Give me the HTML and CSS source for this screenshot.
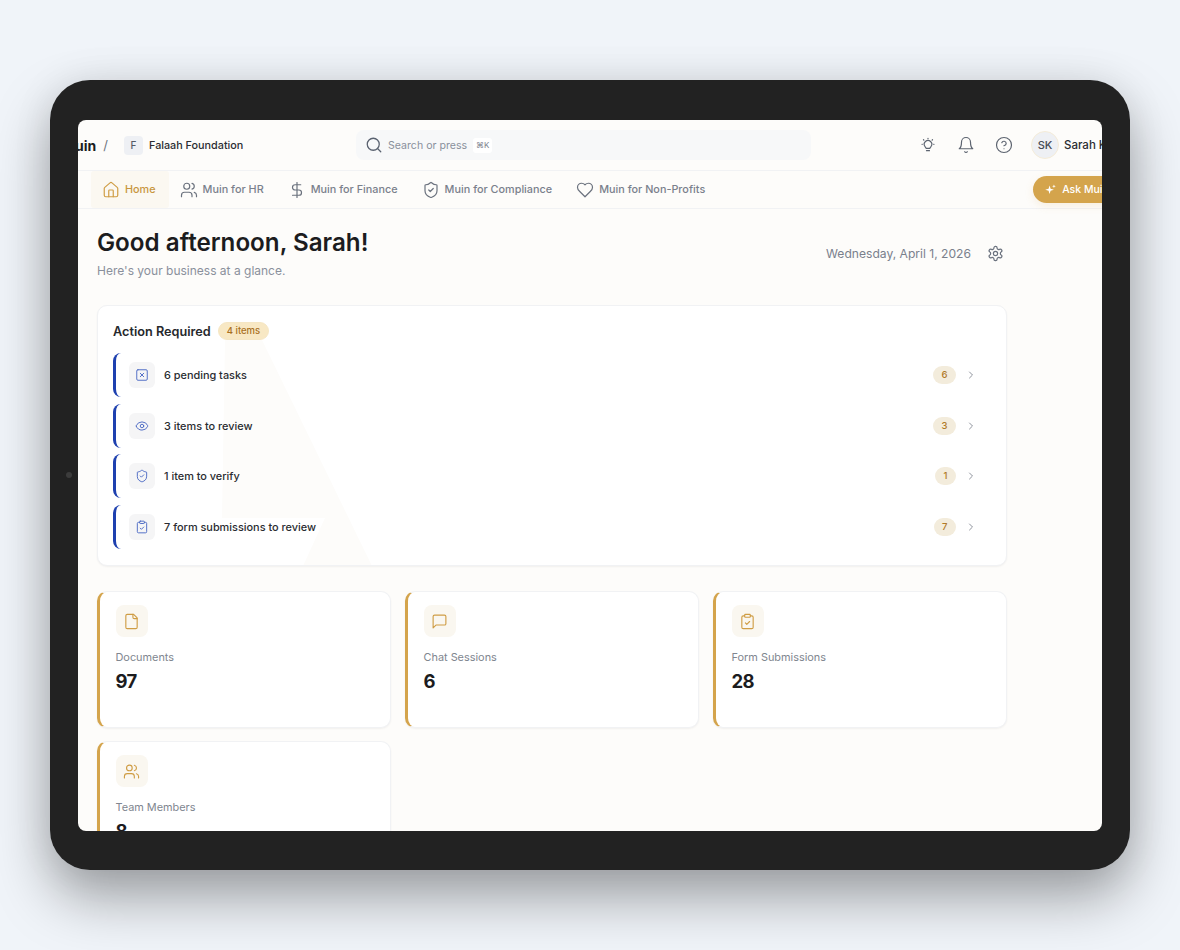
FILE: index.html
```html
<!DOCTYPE html>
<html lang="en">
<head>
<meta charset="utf-8">
<title>Muin</title>
<link rel="stylesheet" href="styles.css">
</head>
<body>
<div class="device">
  <span class="camera"></span>
  <div class="screen">
    <header class="topbar">
      <div class="brand"><strong class="logo">Muin</strong><span class="slash">/</span></div>
      <span class="org-tile">F</span>
      <span class="org-name">Falaah Foundation</span>
      <div class="search">
        <svg class="ic-search" viewBox="0 0 24 24"><circle cx="11" cy="11" r="8"/><path d="m21 21-4.3-4.3"/></svg>
        <span class="search-text">Search or press</span>
        <kbd class="kbd">⌘K</kbd>
      </div>
      <div class="top-actions">
        <svg class="ic-top" viewBox="0 0 24 24"><path d="M9.500 16.500c-.2-1-.7-1.500-1.400-2.300A5 5 0 1 1 15.900 14.200c-.7.8-1.200 1.300-1.400 2.300z"/><path d="M10 19.500h4"/><path d="M12 3v.5"/><path d="M6 5l.5.5"/><path d="M18 5l-.5.5"/><path d="M4 11h.5"/><path d="M19.500 11h.5"/></svg>
        <svg class="ic-top" viewBox="0 0 24 24"><path d="M6 8a6 6 0 0 1 12 0c0 7 3 9 3 9H3s3-2 3-9"/><path d="M10.300 21a1.940 1.940 0 0 0 3.400 0"/></svg>
        <svg class="ic-top" viewBox="0 0 24 24"><circle cx="12" cy="12" r="10"/><path d="M9.090 9a3 3 0 0 1 5.830 1c0 2-3 3-3 3"/><path d="M12 17h.01"/></svg>
      </div>
      <span class="avatar">SK</span>
      <span class="user-name">Sarah Khan</span>
    </header>
    <nav class="tabs">
      <a class="tab tab-active"><svg class="ic-nav" viewBox="0 0 24 24"><path d="M15 21v-8a1 1 0 0 0-1-1h-4a1 1 0 0 0-1 1v8"/><path d="M3 10a2 2 0 0 1 .7-1.500l7-6a2 2 0 0 1 2.600 0l7 6a2 2 0 0 1 .7 1.500v9a2 2 0 0 1-2 2H5a2 2 0 0 1-2-2z"/></svg>Home</a>
      <a class="tab"><svg class="ic-nav" viewBox="0 0 24 24"><path d="M16 21v-2a4 4 0 0 0-4-4H6a4 4 0 0 0-4 4v2"/><circle cx="9" cy="7" r="4"/><path d="M22 21v-2a4 4 0 0 0-3-3.870"/><path d="M16 3.130a4 4 0 0 1 0 7.750"/></svg>Muin for HR</a>
      <a class="tab"><svg class="ic-nav" viewBox="0 0 24 24"><path d="M12 2v20"/><path d="M17 5H9.500a3.500 3.500 0 0 0 0 7h5a3.500 3.500 0 0 1 0 7H6"/></svg>Muin for Finance</a>
      <a class="tab"><svg class="ic-nav" viewBox="0 0 24 24"><path d="M20 13c0 5-3.500 7.500-7.660 8.950a1 1 0 0 1-.670-.010C7.500 20.500 4 18 4 13V6a1 1 0 0 1 1-1c2 0 4.500-1.200 6.240-2.720a1.170 1.170 0 0 1 1.520 0C14.510 3.810 17 5 19 5a1 1 0 0 1 1 1z"/><path d="m9 12 2 2 4-4"/></svg>Muin for Compliance</a>
      <a class="tab"><svg class="ic-nav" viewBox="0 0 24 24"><path d="M19 14c1.490-1.460 3-3.210 3-5.500A5.500 5.500 0 0 0 16.500 3c-1.760 0-3 .5-4.500 2-1.500-1.500-2.740-2-4.500-2A5.500 5.500 0 0 0 2 8.500c0 2.300 1.500 4.050 3 5.500l7 7Z"/></svg>Muin for Non-Profits</a>
      <button class="ask"><svg class="ic-spark" viewBox="0 0 24 24"><path d="M10 3l2.200 7.300 7.300 2.200-7.300 2.200L10 22l-2.200-7.300L.5 12.500l7.300-2.200z"/><path d="M19.500 1l1 3 3 1-3 1-1 3-1-3-3-1 3-1z"/></svg>Ask Muin</button>
    </nav>
    <main class="main">
      <section class="hello">
        <div>
          <h1 class="title">Good afternoon, Sarah!</h1>
          <p class="subtitle">Here's your business at a glance.</p>
        </div>
        <div class="date-wrap">
          <span class="date">Wednesday, April 1, 2026</span>
          <svg class="ic-gear" viewBox="0 0 24 24"><path d="M12.220 2h-.44a2 2 0 0 0-2 2v.18a2 2 0 0 1-1 1.730l-.43.25a2 2 0 0 1-2 0l-.15-.08a2 2 0 0 0-2.730.73l-.22.38a2 2 0 0 0 .73 2.730l.15.1a2 2 0 0 1 1 1.720v.51a2 2 0 0 1-1 1.740l-.15.09a2 2 0 0 0-.73 2.730l.22.38a2 2 0 0 0 2.730.73l.15-.08a2 2 0 0 1 2 0l.43.25a2 2 0 0 1 1 1.730V20a2 2 0 0 0 2 2h.44a2 2 0 0 0 2-2v-.18a2 2 0 0 1 1-1.730l.43-.25a2 2 0 0 1 2 0l.15.08a2 2 0 0 0 2.730-.73l.22-.39a2 2 0 0 0-.73-2.730l-.15-.08a2 2 0 0 1-1-1.740v-.5a2 2 0 0 1 1-1.740l.15-.09a2 2 0 0 0 .73-2.730l-.22-.38a2 2 0 0 0-2.730-.73l-.15.08a2 2 0 0 1-2 0l-.43-.25a2 2 0 0 1-1-1.730V4a2 2 0 0 0-2-2z"/><circle cx="12" cy="12" r="3"/></svg>
        </div>
      </section>
      <section class="action-card">
        <svg class="watermark" viewBox="0 0 170 226"><path d="M15 0h37l110 226H93l22-48H12z"/></svg>
        <div class="action-head"><h2 class="action-title">Action Required</h2><span class="badge">4 items</span></div>
        <ul class="rows">
          <li class="row">
            <span class="row-tile"><svg class="ic-row" viewBox="0 0 24 24"><rect x="3" y="3" width="18" height="18" rx="2"/><path d="m15 9-6 6"/><path d="m9 9 6 6"/></svg></span>
            <span class="row-text">6 pending tasks</span><span class="count">6</span>
            <svg class="ic-chev" viewBox="0 0 24 24"><path d="m9 18 6-6-6-6"/></svg>
          </li>
          <li class="row">
            <span class="row-tile"><svg class="ic-row" viewBox="0 0 24 24"><path d="M2.060 12.350a1 1 0 0 1 0-.700 10.750 10.750 0 0 1 19.880 0 1 1 0 0 1 0 .700 10.750 10.750 0 0 1-19.880 0"/><circle cx="12" cy="12" r="3"/></svg></span>
            <span class="row-text">3 items to review</span><span class="count">3</span>
            <svg class="ic-chev" viewBox="0 0 24 24"><path d="m9 18 6-6-6-6"/></svg>
          </li>
          <li class="row">
            <span class="row-tile"><svg class="ic-row" viewBox="0 0 24 24"><path d="M20 13c0 5-3.500 7.500-7.660 8.950a1 1 0 0 1-.670-.010C7.500 20.500 4 18 4 13V6a1 1 0 0 1 1-1c2 0 4.500-1.200 6.240-2.720a1.170 1.170 0 0 1 1.520 0C14.510 3.810 17 5 19 5a1 1 0 0 1 1 1z"/><path d="m9 12 2 2 4-4"/></svg></span>
            <span class="row-text">1 item to verify</span><span class="count">1</span>
            <svg class="ic-chev" viewBox="0 0 24 24"><path d="m9 18 6-6-6-6"/></svg>
          </li>
          <li class="row">
            <span class="row-tile"><svg class="ic-row" viewBox="0 0 24 24"><rect x="8" y="2" width="8" height="4" rx="1"/><path d="M16 4h2a2 2 0 0 1 2 2v14a2 2 0 0 1-2 2H6a2 2 0 0 1-2-2V6a2 2 0 0 1 2-2h2"/><path d="m9 14 2 2 4-4"/></svg></span>
            <span class="row-text">7 form submissions to review</span><span class="count">7</span>
            <svg class="ic-chev" viewBox="0 0 24 24"><path d="m9 18 6-6-6-6"/></svg>
          </li>
        </ul>
      </section>
      <section class="stats">
        <article class="stat">
          <span class="stat-tile"><svg class="ic-stat" viewBox="0 0 24 24"><path d="M15 2H6a2 2 0 0 0-2 2v16a2 2 0 0 0 2 2h12a2 2 0 0 0 2-2V7Z"/><path d="M14 2v4a2 2 0 0 0 2 2h4"/></svg></span>
          <span class="stat-label">Documents</span><strong class="stat-num">97</strong>
        </article>
        <article class="stat">
          <span class="stat-tile"><svg class="ic-stat" viewBox="0 0 24 24"><path d="M21 15a2 2 0 0 1-2 2H7l-4 4V5a2 2 0 0 1 2-2h14a2 2 0 0 1 2 2z"/></svg></span>
          <span class="stat-label">Chat Sessions</span><strong class="stat-num">6</strong>
        </article>
        <article class="stat">
          <span class="stat-tile"><svg class="ic-stat" viewBox="0 0 24 24"><rect x="8" y="2" width="8" height="4" rx="1"/><path d="M16 4h2a2 2 0 0 1 2 2v14a2 2 0 0 1-2 2H6a2 2 0 0 1-2-2V6a2 2 0 0 1 2-2h2"/><path d="m9 14 2 2 4-4"/></svg></span>
          <span class="stat-label">Form Submissions</span><strong class="stat-num">28</strong>
        </article>
        <article class="stat">
          <span class="stat-tile"><svg class="ic-stat" viewBox="0 0 24 24"><path d="M16 21v-2a4 4 0 0 0-4-4H6a4 4 0 0 0-4 4v2"/><circle cx="9" cy="7" r="4"/><path d="M22 21v-2a4 4 0 0 0-3-3.870"/><path d="M16 3.130a4 4 0 0 1 0 7.750"/></svg></span>
          <span class="stat-label">Team Members</span><strong class="stat-num">8</strong>
        </article>
      </section>
    </main>
  </div>
</div>
</body>
</html>
```
FILE: styles.css
```css
* { box-sizing: border-box; }
html, body { height: 100%; }
body {
  margin: 0;
  background: #f0f4f9;
  font-family: "Inter", "Liberation Sans", sans-serif;
  color: #1c1c1e;
  overflow: hidden;
}
svg { fill: none; stroke: currentColor; stroke-width: 2; stroke-linecap: round; stroke-linejoin: round; flex: none; display: block; }
ul { list-style: none; margin: 0; padding: 0; }
h1, h2, p { margin: 0; }

.device {
  position: relative;
  width: 1080px;
  height: 790px;
  margin: 80px 0 0 50px;
  padding: 40px 28px 39px;
  background: #222222;
  border-radius: 40px;
  box-shadow: 0 28px 56px 0 rgba(0, 0, 0, .34), 0 0 40px rgba(0, 0, 0, .08);
}
.camera {
  position: absolute;
  left: 16px;
  top: 392px;
  width: 6px;
  height: 6px;
  border-radius: 50%;
  background: #3c3c3c;
}
.screen {
  height: 711px;
  border-radius: 8px;
  overflow: hidden;
  background: #fdfcfa;
}

.topbar {
  display: flex;
  align-items: center;
  height: 51px;
  border-bottom: 1px solid #f1f2f4;
  white-space: nowrap;
}
.topbar > * { flex: none; }
.brand { display: flex; align-items: center; width: 46px; margin-left: -16px; }
.logo { font-size: 14px; font-weight: 700; color: #1c1c1e; }
.slash { margin-left: 7px; font-size: 13px; color: #6f7682; }
.org-tile {
  display: flex; align-items: center; justify-content: center;
  width: 19px; height: 19px;
  margin-left: 16px;
  border-radius: 4px;
  background: #eef0f4;
  font-size: 10px; font-weight: 500; color: #555b66;
}
.org-name { margin-left: 6px; width: 207px; font-size: 10.800px; font-weight: 500; color: #2a2c31; }
.search {
  display: flex; align-items: center;
  width: 455px; height: 30px;
  padding-left: 9px;
  border-radius: 8px;
  background: #f7f8f9;
}
.ic-search { width: 18px; height: 18px; color: #5a6270; stroke-width: 1.700; }
.search-text { margin-left: 5px; font-size: 10.600px; color: #8a909c; }
.kbd {
  display: flex; align-items: center; justify-content: center;
  width: 19px; height: 15px;
  margin-left: 6px;
  border-radius: 3px;
  background: #fff;
  font-family: inherit; font-size: 8px; color: #7a808c;
}
.top-actions { display: flex; gap: 20px; margin-left: 108px; }
.ic-top { width: 18px; height: 18px; color: #5d6470; stroke-width: 1.600; }
.avatar {
  display: flex; align-items: center; justify-content: center;
  width: 28px; height: 28px;
  margin-left: 18px;
  border: 1.500px solid #f5ecd8;
  border-radius: 50%;
  background: #eef0f4;
  font-size: 11px; font-weight: 500; color: #444a55;
}
.user-name { margin-left: 5px; font-size: 11.500px; font-weight: 500; color: #2a2c31; }

.tabs {
  display: flex; align-items: center;
  height: 38px;
  padding-left: 13px;
  border-bottom: 1px solid #f1f2f4;
  white-space: nowrap;
}
.tab {
  display: flex; align-items: center; gap: 5px;
  flex: none;
  height: 37px;
  padding: 0 13px 0 11px;
  font-size: 10.800px; font-weight: 450; letter-spacing: .02px; color: #7a808c;
}
.tab-active { background: #fbf8f1; color: #c8963e; border-radius: 3px; }
.ic-nav { width: 18px; height: 18px; color: #6b727e; stroke-width: 1.600; }
.tab-active .ic-nav { color: #cf9d45; }
.ask {
  display: flex; align-items: center; gap: 6px;
  flex: none;
  margin-left: 315px;
  height: 27px;
  width: 100px;
  padding: 0 12px;
  border: 0;
  border-radius: 14px;
  background: #d4a44c;
  color: #fff;
  font-family: inherit; font-size: 10.500px; font-weight: 450;
  white-space: nowrap;
  box-shadow: 0 3px 8px rgba(212, 164, 76, .15);
}
.ic-spark { width: 11px; height: 11px; fill: #fff; stroke: none; }

.main { width: 929px; padding: 19px 0 0 19px; }
.hello { display: flex; justify-content: space-between; align-items: center; }
.title { font-size: 24.200px; font-weight: 600; line-height: 30px; color: #1c1c1e; }
.subtitle { margin-top: 5px; font-size: 12px; line-height: 16px; color: #8a909c; }
.date-wrap { display: flex; align-items: center; gap: 16px; padding-right: 3px; }
.date { font-size: 12.100px; color: #7a808c; }
.ic-gear { width: 17px; height: 17px; color: #6b727e; stroke-width: 1.700; }

.action-card {
  position: relative;
  height: 261px;
  margin-top: 26px;
  padding: 0 15px;
  overflow: hidden;
  border: 1px solid #f1f2f4;
  border-radius: 10px;
  background: #fff;
  box-shadow: 0 1px 2px rgba(0, 0, 0, .05);
}
.watermark { position: absolute; left: 112px; top: 34px; width: 170px; height: 226px; fill: #fdfcfa; stroke: none; }
.action-head { position: relative; display: flex; align-items: center; gap: 7px; height: 50px; }
.action-title { font-size: 12.700px; font-weight: 600; color: #26282c; }
.badge {
  padding: 0 8px;
  height: 18px; line-height: 16px;
  border: 1px solid #f5e6c4;
  border-radius: 9px;
  background: #f8e8c4;
  font-size: 9.500px; font-weight: 500; color: #a9701f;
}
.rows { position: relative; display: flex; flex-direction: column; gap: 6.500px; margin-top: -3px; }
.row {
  display: flex; align-items: center;
  height: 44px;
  padding: 0 14px 0 13px;
  border-left: 3px solid #1e40af;
  border-radius: 8px;
}
.row-tile {
  display: flex; align-items: center; justify-content: center;
  width: 26px; height: 26px;
  border-radius: 6px;
  background: #f5f5f6;
}
.ic-row { width: 14px; height: 14px; color: #4a68c4; stroke-width: 1.600; }
.row-text { flex: 1; margin-left: 9px; font-size: 10.900px; font-weight: 450; color: #2a2c31; }
.count {
  padding: 0 8.500px;
  height: 18px; line-height: 18px;
  border-radius: 9px;
  background: #f3ecdc;
  text-align: center;
  font-size: 9.500px; font-weight: 500; color: #b07a28;
}
.ic-chev { width: 12px; height: 12px; margin-left: 9px; color: #8f949d; }

.stats { display: grid; grid-template-columns: repeat(3, 1fr); gap: 13px 14px; margin-top: 25px; }
.stat {
  display: flex; flex-direction: column; align-items: flex-start;
  height: 137px;
  padding: 13px 15.500px;
  border: 1px solid #f1f2f4;
  border-left: 3px solid #d4a44c;
  border-radius: 10px;
  background: #fff;
  box-shadow: 0 1px 2px rgba(0, 0, 0, .05);
}
.stat-tile {
  display: flex; align-items: center; justify-content: center;
  width: 32px; height: 32px;
  border-radius: 8px;
  background: #faf7f0;
}
.ic-stat { width: 17px; height: 17px; color: #cf9d45; stroke-width: 1.600; }
.stat-label { margin-top: 13px; font-size: 10.900px; line-height: 14px; color: #80868f; }
.stat-num { margin-top: 4px; font-size: 18.500px; line-height: 26px; font-weight: 700; letter-spacing: -.6px; color: #1c1c1e; }
```
